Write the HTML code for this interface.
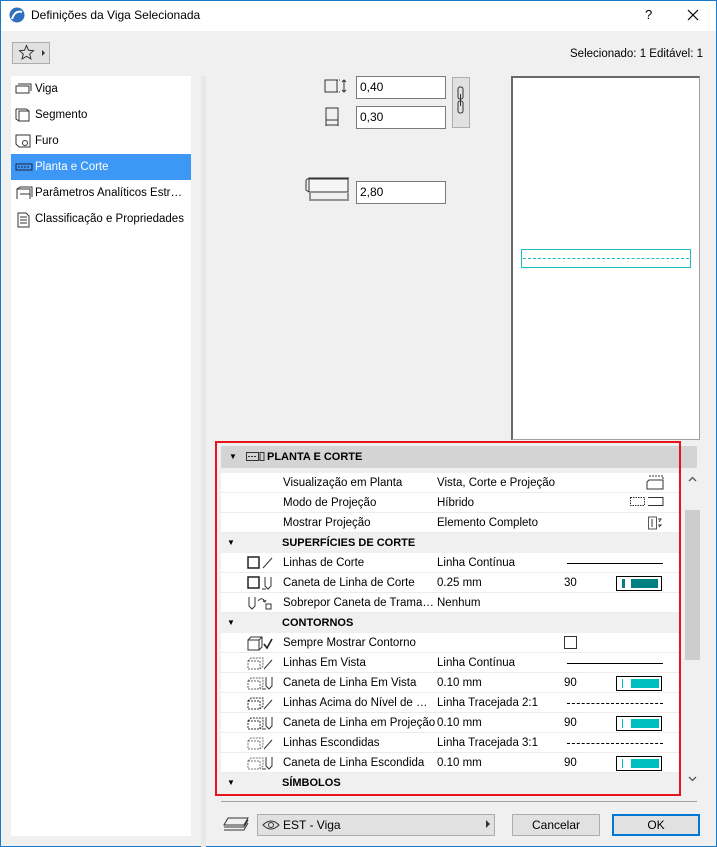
<!DOCTYPE html><html><head><meta charset="utf-8"><style>
*{box-sizing:border-box;margin:0;padding:0}
body{width:717px;height:847px;overflow:hidden;background:#f0f0f0;font-family:"Liberation Sans",sans-serif;font-size:12px;color:#000;position:relative}
.abs{position:absolute}
.frame{left:0;top:0;width:717px;height:847px;border:1px solid #1979ca;border-top:none}
.title{left:0;top:0;width:717px;height:31px;background:#fff;border-top:1px solid #1979ca}
.list{left:11px;top:76px;width:180px;height:760px;background:#fff}
.li{position:absolute;left:0;width:180px;height:26px;line-height:26px;padding-left:24px;font-size:11.5px;white-space:nowrap;overflow:hidden;text-overflow:ellipsis;padding-right:3px}
.li svg{position:absolute;left:4px;top:6px}
.sel{background:#3c97f5;color:#fff}
.inp{position:absolute;width:90px;height:23px;background:#fff;border:1px solid #7a7a7a;line-height:21px;padding-left:3px}
.row{position:absolute;left:221px;width:458px;height:20px;background:#fff;border-bottom:1px solid #ececec;line-height:20px;font-size:11.5px}
.sec{position:absolute;left:221px;width:458px;height:20px;background:#f0f0f0;line-height:20px;font-weight:bold;font-size:11px}
.l{position:absolute;left:62px;width:152px;white-space:nowrap;overflow:hidden;text-overflow:ellipsis}.v{position:absolute;left:216px;white-space:nowrap}.n{position:absolute;left:343px}
.pen{position:absolute;left:395px;top:3px;width:46px;height:15px;border:1px solid #000;background:#fff}
.pen i{position:absolute;top:2px;height:9px}
.btn{position:absolute;height:22px;border:1px solid #adadad;background:#e1e1e1;text-align:center;line-height:20px}
.ic{position:absolute;left:24px;top:2px}
</style></head><body>
<div class="abs title"></div>
<div class="abs frame"></div>
<svg class="abs" style="left:9px;top:7px" width="16" height="16"><circle cx="8" cy="8" r="7.5" fill="#2f6fc0"/><path d="M3 12 Q6 3 13 5" stroke="#fff" stroke-width="2" fill="none"/></svg>
<div class="abs" style="left:31px;top:8px;font-size:12px">Definições da Viga Selecionada</div>
<div class="abs" style="left:645px;top:7px;font-size:13px">?</div>
<svg class="abs" style="left:687px;top:9px" width="12" height="12"><path d="M1 1L11 11M11 1L1 11" stroke="#000" stroke-width="1.2"/></svg>
<div class="abs" style="left:12px;top:42px;width:38px;height:22px;border:1px solid #adadad;background:#e1e1e1"></div>
<svg class="abs" style="left:18px;top:44px" width="30" height="18"><path d="M8.5 1.5l2 4.8 5 .4-3.8 3.3 1.2 5-4.4-2.7-4.4 2.7 1.2-5L1.5 6.7l5-.4z" fill="none" stroke="#333"/><path d="M24 6l3 3-3 3z" fill="#333"/></svg>
<div class="abs" style="left:570px;top:48px;font-size:11.5px">Selecionado: 1 Editável: 1</div>
<div class="abs list">
<div class="li" style="top:0">Viga<svg width="18" height="14"><rect x="1" y="4" width="13" height="7" fill="none" stroke="#333"/><path d="M3 2h13v7" fill="none" stroke="#333"/></svg></div>
<div class="li" style="top:26px">Segmento<svg width="18" height="14"><rect x="4" y="3" width="10" height="10" fill="none" stroke="#333"/><path d="M1 1h10l3 2M1 1v10l3 2" fill="none" stroke="#333"/></svg></div>
<div class="li" style="top:52px">Furo<svg width="18" height="14"><path d="M1 1h14v12H4L1 10z" fill="none" stroke="#333"/><circle cx="10" cy="9" r="2.5" fill="none" stroke="#333"/></svg></div>
<div class="li sel" style="top:78px">Planta e Corte<svg width="18" height="14"><rect x="1" y="4" width="16" height="6" fill="none" stroke="#224"/><path d="M3 7h12" stroke="#224" stroke-dasharray="2 1"/></svg></div>
<div class="li" style="top:104px">Parâmetros Analíticos Estruturais<svg width="18" height="14"><path d="M2 13V3h13v10M2 3l3-2h12v10M5 8h10" fill="none" stroke="#333"/></svg></div>
<div class="li" style="top:130px">Classificação e Propriedades<svg width="18" height="16"><path d="M3 1h8l3 3v11H3z M5 5h7M5 8h7M5 11h7" fill="none" stroke="#333"/></svg></div>
</div>
<div class="abs" style="left:201px;top:76px;width:5px;height:771px;background:#e8e8e8"></div>
<svg class="abs" style="left:324px;top:78px" width="26" height="50"><rect x="1" y="2" width="12" height="12" fill="none" stroke="#333"/><path d="M13 2h4M13 14h4" stroke="#333" stroke-dasharray="1 1"/><path d="M20 2v12M18 4l2-2 2 2M18 12l2 2 2-2" stroke="#333" fill="none"/><rect x="2" y="30" width="12" height="12" fill="none" stroke="#333"/><path d="M2 42v6M14 42v6M2 47h12" stroke="#333" fill="none"/></svg>
<div class="inp" style="left:356px;top:76px">0,40</div>
<div class="inp" style="left:356px;top:106px">0,30</div>
<div class="abs" style="left:452px;top:77px;width:18px;height:51px;border:1px solid #adadad;background:#e1e1e1"></div>
<svg class="abs" style="left:456px;top:86px" width="10" height="30"><rect x="2" y="1" width="5" height="12" rx="2" fill="none" stroke="#333"/><rect x="2" y="15" width="5" height="12" rx="2" fill="none" stroke="#333"/><path d="M4.5 8v12" stroke="#333"/></svg>
<svg class="abs" style="left:305px;top:176px" width="44" height="28"><path d="M1 4l3-2h41" fill="none" stroke="#333"/><rect x="4" y="3" width="39" height="13" fill="#f6f6f6" stroke="#333"/><path d="M1 4v10l3 2" fill="none" stroke="#333"/><path d="M5 17v8M43 17v8M6 24h36" stroke="#333" fill="none"/></svg>
<div class="inp" style="left:356px;top:181px">2,80</div>
<div class="abs" style="left:511px;top:76px;width:189px;height:364px;background:#fff;border:1px solid #a0a0a0;border-left:2px solid #696969;border-top:2px solid #696969"></div>
<div class="abs" style="left:521px;top:249px;width:170px;height:19px;border:1px solid #1bbcbc"></div>
<div class="abs" style="left:523px;top:258px;width:166px;height:1px;border-top:1px dashed #1bbcbc"></div>
<div class="abs" style="left:221px;top:446px;width:476px;height:22px;background:#d4d4d4;border-radius:2px;line-height:22px;font-weight:bold;font-size:11px"><span style="position:absolute;left:8px;top:0;font-size:8px">▼</span><svg style="position:absolute;left:25px;top:6px" width="20" height="10"><rect x="0.5" y="0.5" width="12" height="8" fill="none" stroke="#333"/><path d="M2 4.5h9" stroke="#333" stroke-dasharray="2 1"/><rect x="14" y="0.5" width="4" height="8" fill="none" stroke="#333"/></svg><span style="position:absolute;left:46px">PLANTA E CORTE</span></div>
<div class="row" style="top:473px"><span class="l">Visualização em Planta</span><span class="v">Vista, Corte e Projeção</span><svg style="position:absolute;left:425px;top:2px" width="18" height="15"><path d="M3 5h14v9H1V7z" fill="none" stroke="#333"/><path d="M3 1h14v4" fill="none" stroke="#333" stroke-dasharray="2 1"/></svg></div>
<div class="row" style="top:493px"><span class="l">Modo de Projeção</span><span class="v">Híbrido</span><svg style="position:absolute;left:409px;top:4px" width="34" height="10"><rect x=".5" y=".5" width="14" height="8" fill="none" stroke="#333" stroke-dasharray="1.5 1"/><path d="M18 .5h15v8H18" fill="none" stroke="#333"/></svg></div>
<div class="row" style="top:513px"><span class="l">Mostrar Projeção</span><span class="v">Elemento Completo</span><svg style="position:absolute;left:427px;top:2px" width="16" height="15"><rect x=".5" y="2" width="8" height="12" fill="none" stroke="#555"/><path d="M4 4v8M10 4h3l-2 3M10 10h3l-2 2" stroke="#333" fill="none"/></svg></div>
<div class="sec" style="top:533px"><span style="position:absolute;left:6px;font-size:8px">▼</span><span style="position:absolute;left:61px">SUPERFÍCIES DE CORTE</span></div>
<div class="row" style="top:553px"><svg class="ic" width="36" height="16"><rect x="3" y="2" width="11" height="11" fill="none" stroke="#222" stroke-width="1.5"/><path d="M18 13l9-10" stroke="#333"/></svg><span class="l">Linhas de Corte</span><span class="v">Linha Contínua</span><div class="abs" style="left:346px;top:10px;width:96px;height:1px;background:#000"></div></div>
<div class="row" style="top:573px"><svg class="ic" width="36" height="16"><rect x="3" y="2" width="11" height="11" fill="none" stroke="#222" stroke-width="1.5"/><path d="M20 2v9l3 3 3-3V2M17 14h4" stroke="#333" fill="none"/></svg><span class="l">Caneta de Linha de Corte</span><span class="v">0.25 mm</span><span class="n">30</span><div class="pen"><i style="left:5px;width:3px;background:#008080"></i><i style="left:14px;width:27px;background:#008080"></i></div></div>
<div class="row" style="top:593px"><svg class="ic" width="36" height="16"><path d="M4 2v9l3 3 3-3V2M13 6q4-5 7 1M18 6l2 1 1-2" stroke="#333" fill="none"/><rect x="21" y="9" width="5" height="5" fill="none" stroke="#333"/></svg><span class="l">Sobrepor Caneta de Trama de Corte</span><span class="v">Nenhum</span></div>
<div class="sec" style="top:613px"><span style="position:absolute;left:6px;font-size:8px">▼</span><span style="position:absolute;left:61px">CONTORNOS</span></div>
<div class="row" style="top:633px"><svg class="ic" width="36" height="16"><path d="M3 5h11v10H3zM3 5l3-3h11v10l-3 3M14 5l3-3" fill="none" stroke="#333"/><path d="M19 9l3 4 5-9" stroke="#222" stroke-width="1.6" fill="none"/></svg><span class="l">Sempre Mostrar Contorno</span><div class="abs" style="left:343px;top:3px;width:13px;height:13px;border:1px solid #333;background:#fff"></div></div>
<div class="row" style="top:653px"><svg class="ic" width="36" height="16"><path d="M3 6h12v8H3zM3 6l3-3h12v8l-3 3" fill="none" stroke="#666" stroke-dasharray="2 1"/><path d="M19 14l8-9" stroke="#333"/></svg><span class="l">Linhas Em Vista</span><span class="v">Linha Contínua</span><div class="abs" style="left:346px;top:10px;width:96px;height:1px;background:#000"></div></div>
<div class="row" style="top:673px"><svg class="ic" width="36" height="16"><path d="M3 6h12v8H3zM3 6l3-3h12v8l-3 3" fill="none" stroke="#666" stroke-dasharray="2 1"/><path d="M21 2v9l3 3 3-3V2M17 14h4" stroke="#333" fill="none"/></svg><span class="l">Caneta de Linha Em Vista</span><span class="v">0.10 mm</span><span class="n">90</span><div class="pen"><i style="left:5px;width:1px;background:#00bfbf"></i><i style="left:14px;width:28px;background:#00bfbf"></i></div></div>
<div class="row" style="top:693px"><svg class="ic" width="36" height="16"><path d="M3 6h12v8H3zM3 6l3-3h12v8l-3 3" fill="none" stroke="#333" stroke-dasharray="2 1"/><path d="M19 14l8-9" stroke="#333"/></svg><span class="l">Linhas Acima do Nível de Corte</span><span class="v">Linha Tracejada 2:1</span><div class="abs" style="left:346px;top:10px;width:96px;height:1px;border-top:1px dashed #000"></div></div>
<div class="row" style="top:713px"><svg class="ic" width="36" height="16"><path d="M3 6h12v8H3zM3 6l3-3h12v8l-3 3" fill="none" stroke="#333" stroke-dasharray="2 1"/><path d="M21 2v9l3 3 3-3V2M17 14h4" stroke="#333" fill="none"/></svg><span class="l" style="text-overflow:clip">Caneta de Linha em Projeção</span><span class="v">0.10 mm</span><span class="n">90</span><div class="pen"><i style="left:5px;width:1px;background:#00bfbf"></i><i style="left:14px;width:28px;background:#00bfbf"></i></div></div>
<div class="row" style="top:733px"><svg class="ic" width="36" height="16"><path d="M3 6h12v8H3zM3 6l3-3h12v8l-3 3" fill="none" stroke="#777" stroke-dasharray="2 1"/><path d="M19 14l8-9" stroke="#333"/></svg><span class="l">Linhas Escondidas</span><span class="v">Linha Tracejada 3:1</span><div class="abs" style="left:346px;top:10px;width:96px;height:0;border-top:1px dashed #000"></div></div>
<div class="row" style="top:753px"><svg class="ic" width="36" height="16"><path d="M3 6h12v8H3zM3 6l3-3h12v8l-3 3" fill="none" stroke="#777" stroke-dasharray="2 1"/><path d="M21 2v9l3 3 3-3V2M17 14h4" stroke="#333" fill="none"/></svg><span class="l">Caneta de Linha Escondida</span><span class="v">0.10 mm</span><span class="n">90</span><div class="pen"><i style="left:5px;width:1px;background:#00bfbf"></i><i style="left:14px;width:28px;background:#00bfbf"></i></div></div>
<div class="sec" style="top:773px"><span style="position:absolute;left:6px;font-size:8px">▼</span><span style="position:absolute;left:61px">SÍMBOLOS</span></div>
<div class="abs" style="left:685px;top:470px;width:15px;height:320px;background:#f0f0f0"></div>
<div class="abs" style="left:685px;top:510px;width:15px;height:150px;background:#cdcdcd"></div>
<svg class="abs" style="left:688px;top:476px" width="9" height="6"><path d="M1 5l3.5-3.5L8 5" stroke="#555" fill="none" stroke-width="1.3"/></svg>
<svg class="abs" style="left:688px;top:776px" width="9" height="6"><path d="M1 1l3.5 3.5L8 1" stroke="#555" fill="none" stroke-width="1.3"/></svg>
<div class="abs" style="left:215px;top:441px;width:466px;height:355px;border:2px solid #e8141c"></div>
<div class="abs" style="left:221px;top:801px;width:476px;height:1px;background:#a0a0a0"></div>
<svg class="abs" style="left:223px;top:816px" width="26" height="16"><path d="M5 2h20l-4 7H1z M1 11h20l4-7M1 14h20l4-7" fill="none" stroke="#333"/></svg>
<div class="btn" style="left:257px;top:814px;width:238px;text-align:left;padding-left:25px">EST - Viga</div>
<svg class="abs" style="left:262px;top:819px" width="18" height="12"><path d="M1 6q8-8 16 0q-8 8-16 0z" fill="none" stroke="#333"/><circle cx="9" cy="6" r="2.5" fill="none" stroke="#333"/></svg>
<div class="abs" style="left:486px;top:820px;width:0;height:0;border-left:4px solid #333;border-top:4px solid transparent;border-bottom:4px solid transparent"></div>
<div class="btn" style="left:512px;top:814px;width:88px">Cancelar</div>
<div class="btn" style="left:612px;top:814px;width:88px;border:2px solid #0078d7;line-height:18px">OK</div>
</body></html>
